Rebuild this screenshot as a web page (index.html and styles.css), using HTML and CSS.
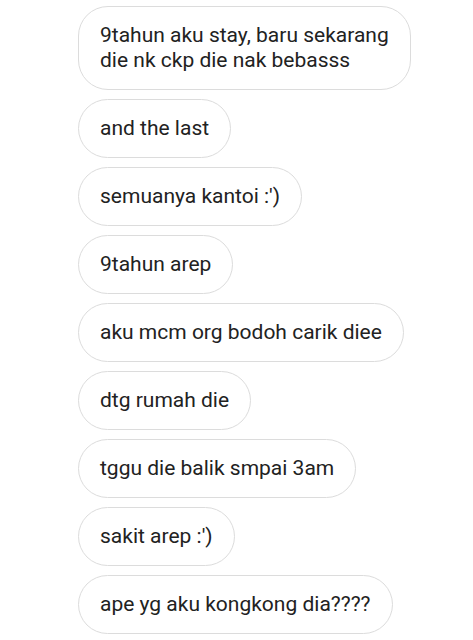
FILE: index.html
```html
<!DOCTYPE html>
<html lang="ms">
<head>
  <meta charset="UTF-8" />
  <meta name="viewport" content="width=device-width, initial-scale=1.0" />
  <title>Chat</title>
  <link rel="stylesheet" href="styles.css">
</head>
<body>
  <div class="chat">
    <div class="bubble">9tahun aku stay, baru sekarang<br>die nk ckp die nak bebasss</div>
    <div class="bubble">and the last</div>
    <div class="bubble">semuanya kantoi :')</div>
    <div class="bubble">9tahun arep</div>
    <div class="bubble">aku mcm org bodoh carik diee</div>
    <div class="bubble">dtg rumah die</div>
    <div class="bubble">tggu die balik smpai 3am</div>
    <div class="bubble">sakit arep :')</div>
    <div class="bubble">ape yg aku kongkong dia????</div>
  </div>
</body>
</html>
```

FILE: styles.css
```css
* {
  margin: 0;
  padding: 0;
  box-sizing: border-box;
}
body {
  font-family: Roboto, 'Noto Sans', sans-serif;
  background: #fff;
  color: #222;
  overflow: hidden;
}
.chat {
  display: flex;
  flex-direction: column;
  align-items: flex-start;
  gap: 9px;
  padding: 6px 0 0 78px;
}
.bubble {
  border: 1px solid #dcdcdc;
  border-radius: 30px;
  padding: 16px 21px;
  font-size: 21px;
  line-height: 25px;
  white-space: nowrap;
}
```
